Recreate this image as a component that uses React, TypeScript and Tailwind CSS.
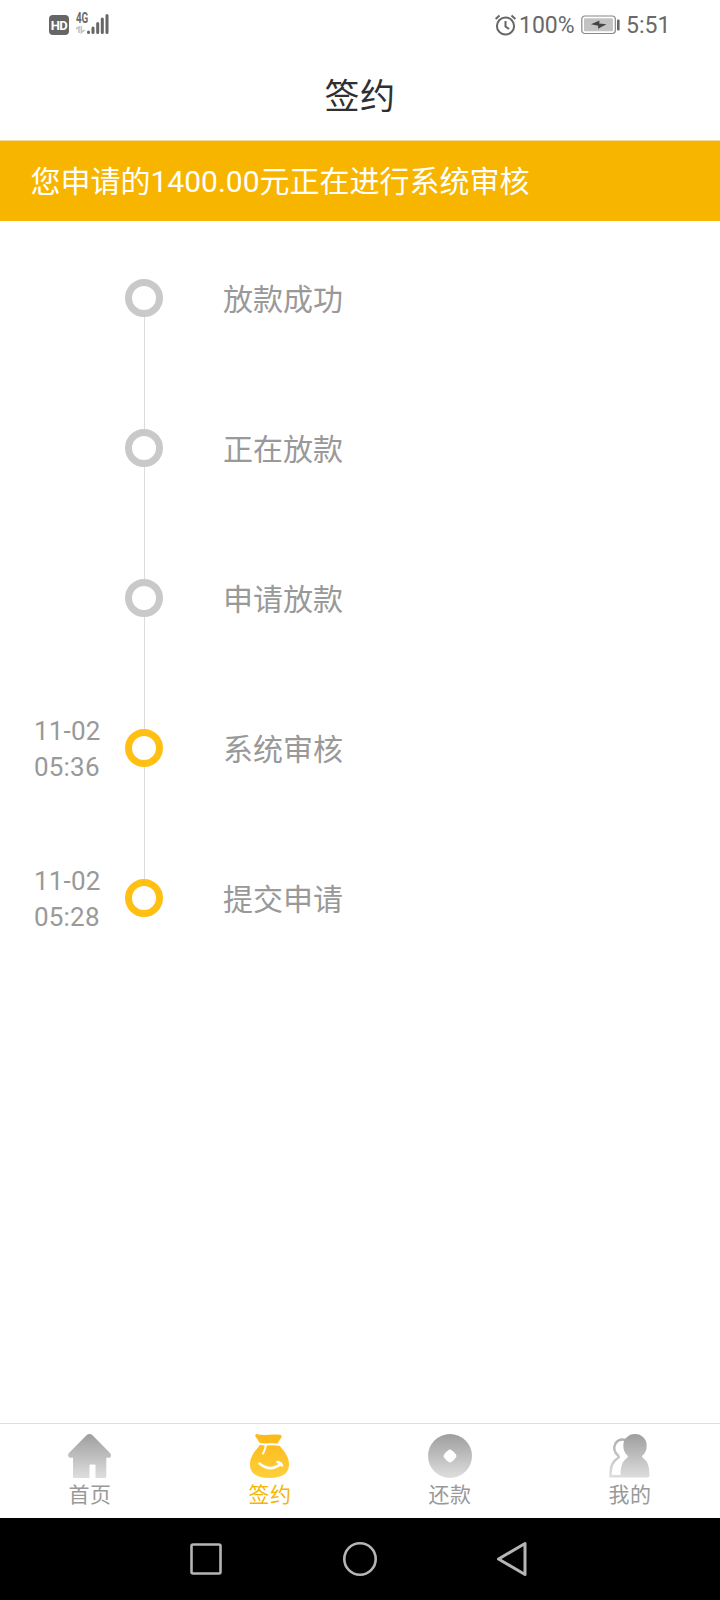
import React from "react";

type Step = { label: string; date?: string; time?: string };

const steps: Step[] = [
  { label: "放款成功" },
  { label: "正在放款" },
  { label: "申请放款" },
  { label: "系统审核", date: "11-02", time: "05:36" },
  { label: "提交申请", date: "11-02", time: "05:28" },
];

function StatusBar() {
  return (
    <div className="flex h-[50px] items-start justify-between pl-[49px] pr-[51px] text-[#696969]">
      <div className="flex pt-[13px]">
        <div className="mt-[2px] flex h-[20px] w-[20px] items-center justify-center rounded-[4px] bg-[#666] text-[13px] leading-none font-bold tracking-[-0.5px] text-white">
          HD
        </div>
        <div className="ml-[7px] flex h-[22px] w-[13px] flex-col">
          <span className="origin-left scale-x-[0.7] text-[14px] leading-[11px] font-bold">4G</span>
          <svg width="9" height="8" viewBox="0 0 9 8" className="mt-[2px]" fill="none" stroke="#c4c4c4" strokeWidth="1.600">
            <path d="M0 3L3 .8V7M5.300 0v6.500L8.500 4" />
          </svg>
        </div>
        <svg width="22" height="22" viewBox="0 0 22 22" className="-ml-[2px]" fill="none" stroke="#666" strokeWidth="3" strokeLinecap="round">
          <path d="M1.500 19v.4M6 15v4.400M10.700 10.500v8.900M15.300 6v13.400M20 2.500v16.900" />
        </svg>
      </div>
      <div className="flex h-[50px] items-center">
        <svg width="22" height="22" viewBox="0 0 22 22" fill="none" stroke="#666" strokeWidth="2">
          <circle cx="10.500" cy="12" r="8.600" />
          <path d="M10.500 7v5.500l3.500 2.500M.6 5L4.500 1.500M20.400 5L16.500 1.500" />
        </svg>
        <span className="ml-[2px] w-[56px] text-[23px] leading-none whitespace-nowrap">100%</span>
        <svg width="39" height="20" viewBox="0 0 39 20" className="ml-[6px]">
          <rect x=".8" y="1" width="33.500" height="17.500" rx="3" fill="#fff" stroke="#888" strokeWidth="1.200" />
          <rect x="3" y="3.200" width="29" height="13" rx="1" fill="#c3c3c3" />
          <path d="M10 9.200L18.500 5.500L18.200 8.400L25.500 9.300L17 13.800L17.200 10.700Z" fill="#444" />
          <rect x="36" y="4.500" width="2.600" height="11" rx="1" fill="#666" />
        </svg>
        <span className="ml-[6px] w-[43px] text-[23px] leading-none whitespace-nowrap">5:51</span>
      </div>
    </div>
  );
}

function TimelineStep({ step, last }: { step: Step; last: boolean }) {
  const ring = step.date ? "border-[#ffbf13]" : "border-[#c9c9c9]";
  return (
    <li className="flex h-[150px] items-start">
      <div className="-mt-[16px] w-[91px] text-[26px] leading-[36px] tracking-[0.2px] whitespace-nowrap text-[#999]">
        <div>{step.date}</div>
        <div>{step.time}</div>
      </div>
      <div className="flex h-[150px] w-[38px] flex-col items-center pl-px">
        <div className={"-ml-px size-[38px] shrink-0 rounded-full border-[7px] bg-white " + ring} />
        {!last && <div className="w-px flex-1 bg-[#dcdcdc]" />}
      </div>
      <div className="ml-[60px] text-[30px] leading-[42px] text-[#999]">{step.label}</div>
    </li>
  );
}

function HomeIcon() {
  return (
    <svg width="44" height="44" viewBox="0 0 44 44">
      <path fill="url(#gray)" d="M18.500 1.300Q21.500-1.200 24.500 1.300L42 19Q44 21.500 42 23.700H38.300V42.500Q38.300 44 36.800 44H27.500V31.500Q27.500 30.500 26.500 30.500H22.500Q21.500 30.500 21.500 31.500V44H6.500Q5 44 5 42.500V23.700H1.500Q-1 21.500 1 19Z" />
    </svg>
  );
}

function BagIcon() {
  return (
    <svg width="44" height="44" viewBox="0 0 44 44" fill="none">
      <path fill="url(#gold)" d="M8.500 0Q13 1.400 20.500 .8Q28 0 32 .8Q34.500 1.500 33.300 3.500L29.800 9Q30.500 11 33.500 14C37.500 18.500 41 24 41 30.500C41 40.500 32.500 44 21.500 44S2 40.500 2 30.500C2 24 5.500 18.500 9.500 14Q12.200 11 11.800 9L7.500 2.500Q6.800 .4 8.500 0Z" />
      <path stroke="#fff" strokeWidth="2" strokeLinecap="round" d="M11 9.800Q16 10.800 21 10.300T31.500 10.800" />
      <path stroke="#fff" strokeWidth="2" strokeLinecap="round" d="M17.700 11.500Q17.500 15 15 19.500" />
      <path stroke="#fff" strokeWidth="2.600" strokeLinecap="round" d="M11.500 29.500Q22.500 38.500 32.500 30M29.500 28Q33 28.500 34 31.500" />
    </svg>
  );
}

function DiscIcon() {
  return (
    <svg width="44" height="44" viewBox="0 0 44 44">
      <circle cx="22" cy="22" r="22" fill="url(#gray)" />
      <rect x="17.200" y="17.200" width="9.600" height="9.600" rx="2.500" fill="#fff" stroke="#fff" strokeWidth="1" transform="rotate(45 22 22)" />
      <circle cx="22" cy="22" r="5.600" fill="#fff" />
    </svg>
  );
}

function PeopleIcon() {
  return (
    <svg width="44" height="44" viewBox="0 0 44 44">
      <path fill="none" stroke="url(#grayLine)" strokeWidth="2.400" d="M18 6Q11 4 7.500 9.500C5 14 6.500 18.500 10.500 22Q11.500 23 10 24C5 27 2.500 31 2.500 42.300H14" />
      <path fill="url(#gray)" d="M27 0A11.500 11.500 0 0 1 38.700 11.500Q38.700 18 34.500 21.500Q33.500 23 35 24C39.500 27 41.500 32 41.500 41.500Q41.500 43.500 39.500 43.500H14.500Q12.500 43.500 12.500 41.500C12.500 32 14.500 27 19 24Q20.500 23 19.500 21.500Q15.300 18 15.300 11.500A11.500 11.500 0 0 1 27 0Z" />
    </svg>
  );
}

const tabs = [
  { label: "首页", icon: <HomeIcon />, active: false },
  { label: "签约", icon: <BagIcon />, active: true },
  { label: "还款", icon: <DiscIcon />, active: false },
  { label: "我的", icon: <PeopleIcon />, active: false },
];

export default function App() {
  return (
    <div className="flex h-[1600px] w-[720px] flex-col overflow-hidden bg-white font-['Roboto','Noto_Sans_CJK_SC',sans-serif]">
      <svg width="0" height="0" className="absolute">
        <defs>
          <linearGradient id="gray" x1="0" y1="0" x2="0" y2="44" gradientUnits="userSpaceOnUse">
            <stop stopColor="#9e9e9e" />
            <stop offset="1" stopColor="#dedede" />
          </linearGradient>
          <linearGradient id="grayLine" x1="0" y1="0" x2="0" y2="44" gradientUnits="userSpaceOnUse">
            <stop stopColor="#aaa" />
            <stop offset="1" stopColor="#dedede" />
          </linearGradient>
          <linearGradient id="gold" x1="0" y1="0" x2="0" y2="44" gradientUnits="userSpaceOnUse">
            <stop stopColor="#fcb816" />
            <stop offset="1" stopColor="#ffcf3b" />
          </linearGradient>
        </defs>
      </svg>
      <StatusBar />
      <header className="flex h-[90px] items-center justify-center pt-[5px] text-[35px] leading-none tracking-[0.5px] text-[#303030]">
        签约
      </header>
      <div className="flex h-[81px] items-center border-t border-[#f5dc96] bg-[#f7b500] pt-[2px] pl-[30.5px] text-[30px] leading-none text-white">
        您申请的1400.00元正在进行系统审核
      </div>
      <ul className="flex-1 pt-[58px] pl-[34px]">
        {steps.map((s, i) => (
          <TimelineStep key={s.label} step={s} last={i === steps.length - 1} />
        ))}
      </ul>
      <nav className="grid h-[95px] grid-cols-4 border-t border-[#dedede]">
        {tabs.map((t) => (
          <div key={t.label} className="flex flex-col items-center pt-[10px]">
            {t.icon}
            <span className={"mt-[6px] text-[21px] leading-[22px] tracking-[0.4px] " + (t.active ? "text-[#f7b500]" : "text-[#999]")}>
              {t.label}
            </span>
          </div>
        ))}
      </nav>
      <footer className="flex h-[82px] items-center justify-between bg-black pr-[190px] pl-[188px]">
        <svg width="36" height="36" viewBox="0 0 36 36" fill="none" stroke="#b5b5b5" strokeWidth="2.600">
          <rect x="3.500" y="3.500" width="29" height="29" rx="1.500" />
        </svg>
        <svg width="36" height="36" viewBox="0 0 36 36" fill="none" stroke="#b5b5b5" strokeWidth="2.600" className="ml-[2px]">
          <circle cx="18" cy="18" r="15.700" />
        </svg>
        <svg width="36" height="36" viewBox="0 0 36 36" fill="none" stroke="#b5b5b5" strokeWidth="3" strokeLinejoin="round">
          <path d="M4.500 18L31 2.500V33.500Z" />
        </svg>
      </footer>
    </div>
  );
}
